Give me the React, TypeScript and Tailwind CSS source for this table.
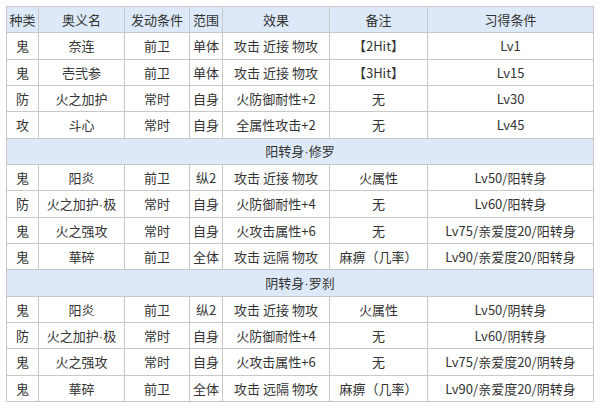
const head = ["种类", "奥义名", "发动条件", "范围", "效果", "备注", "习得条件"]
const widths = ["w-[32px]", "w-[86px]", "w-[65px]", "w-[33px]", "w-[107px]", "w-[98px]", "w-[166px]"]

const base = [
  ["鬼", "奈连", "前卫", "单体", "攻击 近接 物攻", "【2Hit】", "Lv1"],
  ["鬼", "壱弐参", "前卫", "单体", "攻击 近接 物攻", "【3Hit】", "Lv15"],
  ["防", "火之加护", "常时", "自身", "火防御耐性+2", "无", "Lv30"],
  ["攻", "斗心", "常时", "自身", "全属性攻击+2", "无", "Lv45"],
]

const turn = (side: string) => [
  ["鬼", "阳炎", "前卫", "纵2", "攻击 近接 物攻", "火属性", `Lv50/${side}`],
  ["防", "火之加护·极", "常时", "自身", "火防御耐性+4", "无", `Lv60/${side}`],
  ["鬼", "火之强攻", "常时", "自身", "火攻击属性+6", "无", `Lv75/亲爱度20/${side}`],
  ["鬼", "華碎", "前卫", "全体", "攻击 远隔 物攻", "麻痹（几率）", `Lv90/亲爱度20/${side}`],
]

const sections = [
  { title: "阳转身·修罗", rows: turn("阳转身") },
  { title: "阴转身·罗刹", rows: turn("阴转身") },
]

// the CJK font draws · full width; the reference uses a narrow one
function Txt({ s }: { s: string }) {
  const parts = s.split("·")
  if (parts.length === 1) return <>{s}</>
  return (
    <>
      {parts[0]}
      <span className="font-['Liberation_Sans',sans-serif]">·</span>
      {parts[1]}
    </>
  )
}

function Row({ cells }: { cells: string[] }) {
  return (
    <tr className="h-[26.33px]">
      {cells.map((c, i) => (
        <td key={i} className="border border-[#c8c8c8] text-center p-0 whitespace-nowrap">
          <Txt s={c} />
        </td>
      ))}
    </tr>
  )
}

export default function App() {
  return (
    <div className="w-[600px] h-[408px] bg-white pt-[6px] pl-[6px] font-['Microsoft_YaHei','Noto_Sans_CJK_SC',sans-serif] text-[13px] text-[#333] leading-none">
      <table className="border-collapse table-fixed w-[587px]">
        <colgroup>
          {widths.map((w, i) => (
            <col key={i} className={w} />
          ))}
        </colgroup>
        <thead>
          <tr className="h-[26.33px] bg-[#dde9f8]">
            {head.map((h) => (
              <th key={h} className="border border-[#c8c8c8] font-normal text-center p-0 whitespace-nowrap">
                {h}
              </th>
            ))}
          </tr>
        </thead>
        <tbody>
          {base.map((r, i) => (
            <Row key={i} cells={r} />
          ))}
          {sections.map((s) => (
            <>
              <tr key={s.title} className="h-[26.33px] bg-[#dde9f8]">
                <td colSpan={7} className="border border-[#c8c8c8] text-center p-0">
                  <Txt s={s.title} />
                </td>
              </tr>
              {s.rows.map((r, i) => (
                <Row key={s.title + i} cells={r} />
              ))}
            </>
          ))}
        </tbody>
      </table>
    </div>
  )
}
